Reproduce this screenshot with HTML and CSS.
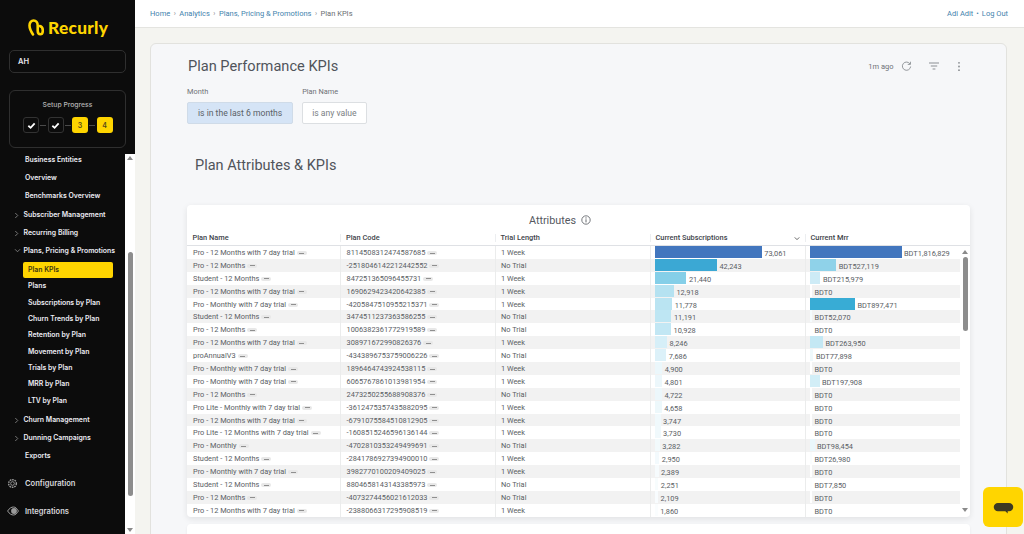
FILE: index.html
```html
<!DOCTYPE html>
<html lang="en">
<head>
<meta charset="utf-8">
<title>Plan KPIs</title>
<link rel="stylesheet" href="styles.css">
</head>
<body>
<div class="app">
  <aside class="sidebar">
    <div class="logo">
      <svg class="logo-mark" viewBox="0 0 16 17" width="16" height="17"><path d="M5 15.5C3 12.5 1.5 9.5 1.5 6.5 1.5 3.5 3.3 1.5 5.6 1.5 8 1.5 9.7 3.5 9.7 6.5L9.7 11.500C9.7 13.800 11 15.300 12.400 15.300 13.900 15.300 14.800 13.700 14.800 11.500 14.800 9.300 13.800 7.500 11.800 7" fill="none" stroke="#ffd500" stroke-width="2.600" stroke-linecap="round"/></svg>
      <span class="logo-text">Recurly</span>
    </div>
    <div class="account">AH</div>
    <div class="setup">
      <div class="setup-title">Setup Progress</div>
      <div class="steps">
        <span class="step done"><svg viewBox="0 0 10 10" width="9" height="9"><path d="M1.5 5.3 4 7.6 8.5 2.6" fill="none" stroke="#fff" stroke-width="2"/></svg></span>
        <span class="dash"></span>
        <span class="step done"><svg viewBox="0 0 10 10" width="9" height="9"><path d="M1.5 5.3 4 7.6 8.5 2.6" fill="none" stroke="#fff" stroke-width="2"/></svg></span>
        <span class="dash"></span>
        <span class="step todo">3</span>
        <span class="dash"></span>
        <span class="step todo">4</span>
      </div>
    </div>
    <div class="nav-wrap">
      <nav class="nav">
        <a class="nav-item">Business Entities</a>
        <a class="nav-item">Overview</a>
        <a class="nav-item">Benchmarks Overview</a>
        <a class="nav-item group"><svg class="chev" viewBox="0 0 6 8" width="5" height="7"><path d="M1.5 1 4.5 4 1.5 7" fill="none" stroke="#8a8a8a" stroke-width="1"/></svg>Subscriber Management</a>
        <a class="nav-item group"><svg class="chev" viewBox="0 0 6 8" width="5" height="7"><path d="M1.5 1 4.5 4 1.5 7" fill="none" stroke="#8a8a8a" stroke-width="1"/></svg>Recurring Billing</a>
        <a class="nav-item group open"><svg class="chev" viewBox="0 0 8 6" width="7" height="5"><path d="M1 1.5 4 4.5 7 1.5" fill="none" stroke="#8a8a8a" stroke-width="1"/></svg>Plans, Pricing &amp; Promotions</a>
        <div class="sub">
          <a class="sub-item active">Plan KPIs</a>
          <a class="sub-item">Plans</a>
          <a class="sub-item">Subscriptions by Plan</a>
          <a class="sub-item">Churn Trends by Plan</a>
          <a class="sub-item">Retention by Plan</a>
          <a class="sub-item">Movement by Plan</a>
          <a class="sub-item">Trials by Plan</a>
          <a class="sub-item">MRR by Plan</a>
          <a class="sub-item">LTV by Plan</a>
        </div>
        <a class="nav-item group"><svg class="chev" viewBox="0 0 6 8" width="5" height="7"><path d="M1.5 1 4.5 4 1.5 7" fill="none" stroke="#8a8a8a" stroke-width="1"/></svg>Churn Management</a>
        <a class="nav-item group"><svg class="chev" viewBox="0 0 6 8" width="5" height="7"><path d="M1.5 1 4.5 4 1.5 7" fill="none" stroke="#8a8a8a" stroke-width="1"/></svg>Dunning Campaigns</a>
        <a class="nav-item">Exports</a>
        <a class="nav-main first"><svg class="nav-icon" viewBox="0 0 12 12" width="11" height="11"><circle cx="6" cy="6" r="2" fill="none" stroke="#9a9a9a" stroke-width="1"/><circle cx="6" cy="6" r="4.2" fill="none" stroke="#9a9a9a" stroke-width="1.6" stroke-dasharray="1.8 .9"/></svg>Configuration</a>
        <a class="nav-main"><svg class="nav-icon" viewBox="0 0 12 10" width="12" height="10"><path d="M.6 5C2.5 2 4.5 1 6.5 1S10 2.5 11.4 5C10 7.500 8.500 9 6.500 9S2.500 8 .6 5Z" fill="none" stroke="#9a9a9a" stroke-width="1"/><circle cx="7" cy="5" r="2.900" fill="#9a9a9a"/></svg>Integrations</a>
      </nav>
      <div class="side-scroll">
        <span class="arrow up"></span>
        <span class="side-thumb"></span>
        <span class="arrow down"></span>
      </div>
    </div>
  </aside>
  <div class="main">
    <header class="topbar">
      <div class="crumbs">
        <a>Home</a><i>›</i><a>Analytics</a><i>›</i><a>Plans, Pricing &amp; Promotions</a><i>›</i><span>Plan KPIs</span>
      </div>
      <div class="user"><a>Adi Adit</a><i>•</i><a>Log Out</a></div>
    </header>
    <section class="content">
      <div class="dash-card">
        <div class="dash-head">
          <h1>Plan Performance KPIs</h1>
          <div class="tools">
            <span class="ago">1m ago</span>
            <svg viewBox="0 0 12 12" width="11" height="11"><path d="M9.800 3.200A4.500 4.500 0 1 0 10.500 6" fill="none" stroke="#8b8f94" stroke-width="1"/><path d="M10.300 .8V3.700H7.400" fill="none" stroke="#8b8f94" stroke-width="1"/></svg>
            <svg class="tool-filter" viewBox="0 0 12 10" width="12" height="10"><path d="M1 2H11M2.800 5H9.200M4.600 8H7.400" fill="none" stroke="#8b8f94" stroke-width="1"/></svg>
            <svg class="tool-more" viewBox="0 0 4 12" width="4" height="11"><circle cx="2" cy="2" r="1" fill="#8b8f94"/><circle cx="2" cy="6" r="1" fill="#8b8f94"/><circle cx="2" cy="10" r="1" fill="#8b8f94"/></svg>
          </div>
        </div>
        <div class="filters">
          <div class="filter"><label>Month</label><button class="chip on">is in the last 6 months</button></div>
          <div class="filter"><label>Plan Name</label><button class="chip">is any value</button></div>
        </div>
        <h2>Plan Attributes &amp; KPIs</h2>
        <div class="table-card">
          <div class="table-title">Attributes <svg viewBox="0 0 10 10" width="10" height="10"><circle cx="5" cy="5" r="4.200" fill="none" stroke="#55595f" stroke-width=".8"/><path d="M5 4.300V7.400" stroke="#55595f" stroke-width=".9"/><circle cx="5" cy="2.900" r=".55" fill="#55595f"/></svg></div>
          <div class="thead">
            <div class="th">Plan Name</div>
            <div class="th">Plan Code</div>
            <div class="th">Trial Length</div>
            <div class="th sorted">Current Subscriptions<svg viewBox="0 0 8 6" width="6" height="5"><path d="M1 1.500 4 4.500 7 1.500" fill="none" stroke="#555" stroke-width="1.200"/></svg></div>
            <div class="th">Current Mrr</div>
          </div>
          <div class="tbody-wrap">
            <div class="tbody">
              <div class="row"><div class="td">Pro - 12 Months with 7 day trial<b class="more"></b></div><div class="td">8114508312474587685<b class="more"></b></div><div class="td">1 Week</div><div class="td num"><span class="bar" style="width:106.8px;background:#4276be"></span>73,061</div><div class="td num mrr"><span class="bar" style="width:92px;background:#4276be"></span>BDT1,816,829</div></div>
              <div class="row"><div class="td">Pro - 12 Months<b class="more"></b></div><div class="td">-2518046142212442552<b class="more"></b></div><div class="td">No Trial</div><div class="td num"><span class="bar" style="width:61.9px;background:#3ba8d4"></span>42,243</div><div class="td num mrr"><span class="bar" style="width:26.7px;background:#8fd2e9"></span>BDT527,119</div></div>
              <div class="row"><div class="td">Student - 12 Months<b class="more"></b></div><div class="td">847251365096455731<b class="more"></b></div><div class="td">1 Week</div><div class="td num"><span class="bar" style="width:31.4px;background:#85cfe8"></span>21,440</div><div class="td num mrr"><span class="bar" style="width:10.9px;background:#cdebf6"></span>BDT215,979</div></div>
              <div class="row"><div class="td">Pro - 12 Months with 7 day trial<b class="more"></b></div><div class="td">1690629423420642385<b class="more"></b></div><div class="td">1 Week</div><div class="td num"><span class="bar" style="width:18.9px;background:#b5e2f1"></span>12,918</div><div class="td num mrr"><span class="bar" style="width:2.4px;background:#fff"></span>BDT0</div></div>
              <div class="row"><div class="td">Pro - Monthly with 7 day trial<b class="more"></b></div><div class="td">-4205847510955215371<b class="more"></b></div><div class="td">1 Week</div><div class="td num"><span class="bar" style="width:17.2px;background:#bae4f2"></span>11,778</div><div class="td num mrr"><span class="bar" style="width:45.4px;background:#38acd5"></span>BDT897,471</div></div>
              <div class="row"><div class="td">Student - 12 Months<b class="more"></b></div><div class="td">3474511237363586255<b class="more"></b></div><div class="td">No Trial</div><div class="td num"><span class="bar" style="width:16.4px;background:#bee6f3"></span>11,191</div><div class="td num mrr"><span class="bar" style="width:2.6px;background:#f5fbfd"></span>BDT52,070</div></div>
              <div class="row"><div class="td">Pro - 12 Months<b class="more"></b></div><div class="td">1006382361772919589<b class="more"></b></div><div class="td">No Trial</div><div class="td num"><span class="bar" style="width:16px;background:#c2e7f4"></span>10,928</div><div class="td num mrr"><span class="bar" style="width:2.4px;background:#fff"></span>BDT0</div></div>
              <div class="row"><div class="td">Pro - 12 Months with 7 day trial<b class="more"></b></div><div class="td">308971672990826376<b class="more"></b></div><div class="td">1 Week</div><div class="td num"><span class="bar" style="width:12.1px;background:#d6eff8"></span>8,246</div><div class="td num mrr"><span class="bar" style="width:13.4px;background:#c4e8f4"></span>BDT263,950</div></div>
              <div class="row"><div class="td">proAnnualV3<b class="more"></b></div><div class="td">-4343896753759006226<b class="more"></b></div><div class="td">No Trial</div><div class="td num"><span class="bar" style="width:11.3px;background:#dcf1f9"></span>7,686</div><div class="td num mrr"><span class="bar" style="width:3.9px;background:#eff9fc"></span>BDT77,898</div></div>
              <div class="row"><div class="td">Pro - Monthly with 7 day trial<b class="more"></b></div><div class="td">1896464743924538115<b class="more"></b></div><div class="td">1 Week</div><div class="td num"><span class="bar" style="width:7.2px;background:#ebf7fb"></span>4,900</div><div class="td num mrr"><span class="bar" style="width:2.4px;background:#fff"></span>BDT0</div></div>
              <div class="row"><div class="td">Pro - Monthly with 7 day trial<b class="more"></b></div><div class="td">6065767861013981954<b class="more"></b></div><div class="td">1 Week</div><div class="td num"><span class="bar" style="width:7px;background:#ecf7fb"></span>4,801</div><div class="td num mrr"><span class="bar" style="width:10px;background:#d2eef7"></span>BDT197,908</div></div>
              <div class="row"><div class="td">Pro - 12 Months<b class="more"></b></div><div class="td">2473250255688908376<b class="more"></b></div><div class="td">No Trial</div><div class="td num"><span class="bar" style="width:6.9px;background:#ecf7fb"></span>4,722</div><div class="td num mrr"><span class="bar" style="width:2.4px;background:#fff"></span>BDT0</div></div>
              <div class="row"><div class="td">Pro Lite - Monthly with 7 day trial<b class="more"></b></div><div class="td">-3612475357435882095<b class="more"></b></div><div class="td">1 Week</div><div class="td num"><span class="bar" style="width:6.8px;background:#edf8fb"></span>4,658</div><div class="td num mrr"><span class="bar" style="width:2.4px;background:#fff"></span>BDT0</div></div>
              <div class="row"><div class="td">Pro - 12 Months with 7 day trial<b class="more"></b></div><div class="td">-6791075584510812905<b class="more"></b></div><div class="td">1 Week</div><div class="td num"><span class="bar" style="width:5.5px;background:#f0f9fc"></span>3,747</div><div class="td num mrr"><span class="bar" style="width:2.4px;background:#fff"></span>BDT0</div></div>
              <div class="row"><div class="td">Pro Lite - 12 Months with 7 day trial<b class="more"></b></div><div class="td">-1608515246596136144<b class="more"></b></div><div class="td">1 Week</div><div class="td num"><span class="bar" style="width:5.5px;background:#f0f9fc"></span>3,730</div><div class="td num mrr"><span class="bar" style="width:2.4px;background:#fff"></span>BDT0</div></div>
              <div class="row"><div class="td">Pro - Monthly<b class="more"></b></div><div class="td">-4702810353249499691<b class="more"></b></div><div class="td">No Trial</div><div class="td num"><span class="bar" style="width:4.8px;background:#f2fafc"></span>3,282</div><div class="td num mrr"><span class="bar" style="width:5px;background:#eaf7fb"></span>BDT98,454</div></div>
              <div class="row"><div class="td">Student - 12 Months<b class="more"></b></div><div class="td">-2841786927394900010<b class="more"></b></div><div class="td">1 Week</div><div class="td num"><span class="bar" style="width:4.3px;background:#f3fafd"></span>2,950</div><div class="td num mrr"><span class="bar" style="width:2.4px;background:#fafdfe"></span>BDT26,980</div></div>
              <div class="row"><div class="td">Pro - Monthly with 7 day trial<b class="more"></b></div><div class="td">3982770100209409025<b class="more"></b></div><div class="td">1 Week</div><div class="td num"><span class="bar" style="width:3.5px;background:#f6fbfd"></span>2,389</div><div class="td num mrr"><span class="bar" style="width:2.4px;background:#fff"></span>BDT0</div></div>
              <div class="row"><div class="td">Student - 12 Months<b class="more"></b></div><div class="td">8804658143143385973<b class="more"></b></div><div class="td">No Trial</div><div class="td num"><span class="bar" style="width:3.3px;background:#f7fcfd"></span>2,251</div><div class="td num mrr"><span class="bar" style="width:2.4px;background:#fdfefe"></span>BDT7,850</div></div>
              <div class="row"><div class="td">Pro - 12 Months<b class="more"></b></div><div class="td">-4073274456021612033<b class="more"></b></div><div class="td">No Trial</div><div class="td num"><span class="bar" style="width:3.1px;background:#f8fcfe"></span>2,109</div><div class="td num mrr"><span class="bar" style="width:2.4px;background:#fff"></span>BDT0</div></div>
              <div class="row"><div class="td">Pro - 12 Months with 7 day trial<b class="more"></b></div><div class="td">-2388066317295908519<b class="more"></b></div><div class="td">1 Week</div><div class="td num"><span class="bar" style="width:2.7px;background:#fafdfe"></span>1,860</div><div class="td num mrr"><span class="bar" style="width:2.4px;background:#fff"></span>BDT0</div></div>
            </div>
            <div class="table-scroll">
              <span class="arrow up"></span>
              <span class="table-thumb"></span>
              <span class="arrow down"></span>
            </div>
          </div>
        </div>
        <div class="next-card"></div>
      </div>
    </section>
  </div>
</div>
<button class="chat" aria-label="Chat"><svg viewBox="0 0 22 14" width="21" height="13"><path d="M5 1H17A4.500 4.500 0 0 1 17 10H15.500L15.500 12.500 13 10H5A4.500 4.500 0 0 1 5 1Z" fill="#3d3a22"/></svg></button>
</body>
</html>
```

FILE: styles.css
```css
* { box-sizing: border-box; }
html, body { margin: 0; height: 100%; overflow: hidden; }
body { font-family: Roboto, "Liberation Sans", sans-serif; background: #f4f4f0; color: #4b4f55; }
a { text-decoration: none; }
i { font-style: normal; }

.app { display: flex; width: 1024px; height: 534px; overflow: hidden; }

/* Sidebar */
.sidebar { width: 135px; flex: none; height: 534px; background: #0c0c0c; display: flex; flex-direction: column; font-family: Inter, Roboto, sans-serif; color: #f1f1f4; }
.logo { height: 50px; padding: 18px 0 0 28px; display: flex; align-items: flex-start; gap: 4px; }
.logo-mark { margin-top: 1px; }
.logo-text { font-family: Lato, Inter, sans-serif; font-weight: 900; font-size: 17.300px; line-height: 20px; color: #ffd500; letter-spacing: .3px; }
.account { margin-left: 9px; width: 117px; height: 23px; border: 1px solid #2f2f2f; border-radius: 5px; padding-left: 8px; font-size: 7.500px; font-weight: 600; line-height: 21px; color: #e8e8f0; }
.setup { margin: 17px 0 0 9px; width: 117px; height: 58px; border: 1px solid #2f2f2f; border-radius: 6px; padding-top: 9px; }
.setup-title { text-align: center; font-size: 6.800px; line-height: 9px; color: #b4b4b4; font-weight: 500; }
.steps { display: flex; align-items: center; margin: 8px 0 0 13px; }
.step { width: 16px; height: 16px; border-radius: 3px; display: flex; align-items: center; justify-content: center; font-size: 7px; font-weight: 600; }
.step.done { border: 1px solid #333; }
.step.todo { background: #ffd500; color: #55491a; }
.dash { width: 6px; height: 1px; margin: 0 1.250px; background: #4a4a4a; }
.nav-wrap { margin-top: 6px; flex: 1; min-height: 0; display: flex; }
.nav { width: 125px; flex: none; overflow: hidden; display: flex; flex-direction: column; }
.nav-item { position: relative; height: 18.200px; flex: none; line-height: 12px; padding: 0 0 0 25px; font-size: 6.900px; font-weight: 600; color: #ececf4; }
.nav-item.group { padding-left: 23.500px; display: flex; align-items: flex-start; line-height: 12px; }
.chev { position: absolute; left: 14px; top: 3px; }
.nav-item.open { height: 17px; }
.sub { display: flex; flex-direction: column; margin-bottom: 4.500px; }
.sub-item { height: 16.350px; flex: none; margin-left: 23px; width: 90px; padding-left: 5px; font-size: 6.900px; font-weight: 600; line-height: 16px; color: #ececf4; }
.sub-item.active { background: #ffd500; color: #3e3510; border-radius: 2px; }
.nav-main { display: flex; align-items: center; position: relative; height: 14px; padding-left: 25px; font-size: 7.600px; font-weight: 600; color: #d8d8dc; flex: none; margin-top: 14px; }
.nav-main.first { margin-top: 8px; }
.nav-icon { position: absolute; left: 7px; top: 2px; }
.side-scroll { width: 10px; background: #fff; display: flex; flex-direction: column; align-items: center; padding: 2px 0 2px; }
.side-thumb { width: 5px; height: 244px; margin-top: 92px; border-radius: 3px; background: #8d8d8d; }
.side-scroll .down { margin-top: auto; }
.arrow { display: block; width: 0; height: 0; border-left: 3px solid transparent; border-right: 3px solid transparent; }
.arrow.up { border-bottom: 4px solid #8a8a8a; }
.arrow.down { border-top: 4px solid #8a8a8a; }

/* Main */
.main { flex: 1; min-width: 0; display: flex; flex-direction: column; }
.topbar { height: 28px; flex: none; background: #fff; border-bottom: 1px solid #e4e4e0; display: flex; justify-content: space-between; align-items: center; padding: 0 16px 0 15px; font-size: 7.500px; color: #3f83ad; }
.crumbs, .user { display: flex; align-items: center; }
.crumbs i { margin: 0 3.500px; color: #888; font-size: 7px; }
.crumbs span { color: #6a6e72; }
.user i { margin: 0 3px; }
.content { flex: 1; min-height: 0; padding: 15px 17px 0 15px; }
.dash-card { height: 520px; background: #f6f7f9; border: 1px solid #e2e2de; border-radius: 6px; padding: 0 36px; }
.dash-head { display: flex; justify-content: space-between; align-items: center; height: 44px; }
h1 { margin: 0 0 0 1px; font-size: 14.600px; font-weight: 400; color: #50545b; }
.tools { display: flex; align-items: center; margin-right: 9px; }
.ago { font-size: 7.500px; color: #6e7277; margin-right: 7.500px; }
.tool-filter { margin-left: 16px; }
.tool-more { margin-left: 17px; }
.filters { display: flex; gap: 9px; margin-top: 1px; }
.filter { display: flex; flex-direction: column; }
.filter label { font-size: 7.400px; color: #6e7277; line-height: 10px; margin-top: -2px; margin-bottom: 5px; }
.chip { height: 22px; border: 1px solid #dcdfe2; background: #fff; border-radius: 2px; padding: 0 9px; font: 400 8.600px Roboto, sans-serif; color: #7a7e83; }
.chip.on { padding: 0 10px; background: #d5e4f6; border-color: #cfdbe8; color: #5a5f66; }
h2 { margin: 32px 0 0 8px; font-size: 14.500px; line-height: 20px; font-weight: 400; color: #50545b; }

.table-card { margin-top: 29px; height: 312px; background: #fff; border-radius: 4px; box-shadow: 0 2px 6px rgba(0,0,0,.09); overflow: hidden; }
.table-title { height: 27px; display: flex; justify-content: center; align-items: center; gap: 5px; padding: 3px 37px 0 0; font-size: 10.800px; color: #55595f; }
.thead { display: grid; grid-template-columns: 153px 154.500px 155px 155px 155.500px; height: 14px; border-bottom: 1px solid #dfe1e5; }
.th { font-size: 7.400px; font-weight: 500; line-height: 12px; padding-left: 5px; color: #3e434a; border-left: 1px solid #eceef0; height: 8px; margin-top: 2px; display: flex; align-items: center; justify-content: space-between; }
.th:first-child { border-left: 0; padding-left: 5.500px; }
.th.sorted svg { margin-right: 5px; }
.tbody-wrap { display: flex; }
.tbody { width: 773px; flex: none; }
.row { display: grid; grid-template-columns: 153px 154.500px 155px 155px 155.500px; height: 12.900px; }
.row:nth-child(even) { background: #f2f2f2; }
.td { font-size: 7.400px; line-height: 12.900px; padding: 1px 0 0 5.500px; border-left: 1px solid #ebecec; color: #5a5e64; white-space: nowrap; overflow: hidden; display: flex; align-items: flex-start; }
.td:first-child { border-left: 0; padding-left: 6px; }
.num { gap: 2.500px; padding: 2px 0 0 4.500px; }
.mrr { padding-left: 4px; }
.bar { display: block; height: 12px; flex: none; margin-top: -2px; }
.more { display: block; flex: none; width: 10px; height: 4px; margin: 4px 0 0 2px; border-radius: 3px; background: linear-gradient(#8f8f8f, #8f8f8f) center / 5px 1px no-repeat, #e8e8e8; }
.table-scroll { width: 10px; flex: none; display: flex; flex-direction: column; align-items: center; padding: 4px 0 5px; }
.table-thumb { width: 5px; height: 74px; margin-top: 3px; border-radius: 3px; background: #8d8d8d; }
.table-scroll .down { margin-top: auto; }
.next-card { margin-top: 7px; height: 30px; background: #fff; border-radius: 4px; box-shadow: 0 1px 3px rgba(0,0,0,.06); }

.chat { position: absolute; left: 983px; top: 487px; width: 40px; height: 40px; border: 0; border-radius: 6px; background: #ffd500; padding: 2px 0 0; display: flex; align-items: center; justify-content: center; }
```
